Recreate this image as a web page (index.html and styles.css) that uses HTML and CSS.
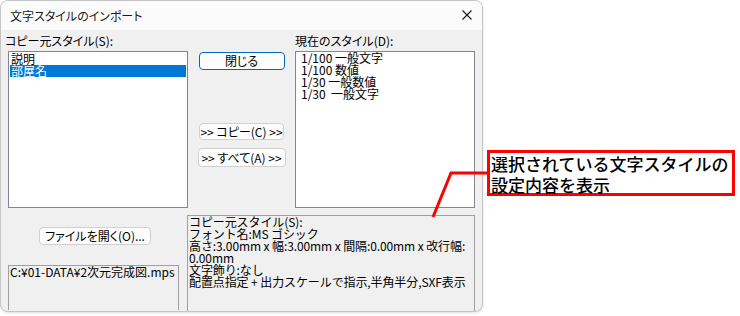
FILE: index.html
```html
<!DOCTYPE html>
<html lang="ja">
<head>
  <meta charset="UTF-8">
  <meta name="viewport" content="width=device-width, initial-scale=1.0">
  <title>文字スタイルのインポート</title>
  <link rel="stylesheet" href="styles.css">
</head>
<body>

  <div class="stage">
    <div class="dialog">
      <div class="titlebar">
        <span class="title">文字スタイルのインポート</span>
        <svg class="close" width="10" height="10" viewBox="0 0 10 10">
          <path d="M0.5 0.5 L9.5 9.5 M9.5 0.5 L0.5 9.5" stroke="#1a1a1a" stroke-width="1.1" fill="none"/>
        </svg>
      </div>

      <div class="client">
        <div class="lists">
          <div class="col">
            <div class="label shift">コピー元スタイル(S):</div>
            <ul class="listbox">
              <li>説明</li>
              <li class="selected">部屋名</li>
            </ul>
          </div>

          <div class="col-mid">
            <button class="btn default close-btn">閉じる</button>
            <button class="btn copy-btn">&gt;&gt; コピー(C) &gt;&gt;</button>
            <button class="btn all-btn">&gt;&gt; すべて(A) &gt;&gt;</button>
          </div>

          <div class="col">
            <div class="label">現在のスタイル(D):</div>
            <ul class="listbox current">
              <li>1/100 一般文字</li>
              <li>1/100 数値</li>
              <li>1/30 一般数値</li>
              <li>1/30&nbsp; 一般文字</li>
            </ul>
          </div>
        </div>

        <div class="bottom">
          <div class="file-panel">
            <button class="btn open-btn">ファイルを開く(O)...</button>
            <div class="path">C:¥01-DATA¥2次元完成図.mps</div>
          </div>
          <div class="info">
            <div>コピー元スタイル(S):</div>
            <div>フォント名:MS ゴシック</div>
            <div>高さ:3.00mm x 幅:3.00mm x 間隔:0.00mm x 改行幅:</div>
            <div>0.00mm</div>
            <div>文字飾り:なし</div>
            <div>配置点指定 + 出力スケールで指示,半角半分,SXF表示</div>
          </div>
        </div>
      </div>
    </div>

    <svg class="leader" width="740" height="316" viewBox="0 0 740 316">
      <polyline points="433,217 451,173 488,173" stroke="#ff0000" stroke-width="3" fill="none"/>
    </svg>
    <div class="callout">選択されている文字スタイルの<br>設定内容を表示</div>
  </div>

</body>
</html>
```

FILE: styles.css
```css
body {
  margin: 0;
  background: #ffffff;
  font-family: "Noto Sans CJK JP", sans-serif;
  color: #000;
}
.stage {
  position: relative;
  width: 740px;
  height: 316px;
  overflow: hidden;
}
.dialog {
  width: 483px;
  height: 312px;
  box-sizing: border-box;
  border: 1px solid #c4c4c4;
  border-radius: 8px;
  overflow: hidden;
  background: #f0f0f0;
  box-shadow: 0 1px 3px rgba(0, 0, 0, 0.12);
}
.titlebar {
  height: 29px;
  background: #fbfbfb;
  display: flex;
  align-items: center;
  justify-content: space-between;
  padding: 0 10px 0 9px;
}
.title {
  font-size: 12px;
  font-feature-settings: "palt";
  color: #1a1a1a;
  margin-top: -1px;
}
.close {
  margin-top: -1px;
}
.client {
  padding: 5px 0 0 7px;
  font-size: 12px;
  line-height: 12px;
}
.lists {
  display: flex;
}
.col {
  width: 180px;
}
.label {
  height: 12px;
  margin-bottom: 4px;
  white-space: nowrap;
  font-feature-settings: "palt";
}
.shift {
  margin-left: -3px;
}
.listbox {
  list-style: none;
  margin: 0;
  padding: 1px 1px 0 1px;
  height: 157px;
  box-sizing: border-box;
  border: 1px solid #82878f;
  background: #fff;
}
.listbox li {
  height: 12px;
  padding-left: 1px;
  white-space: nowrap;
}
.listbox .selected {
  background: #0078d7;
  color: #fff;
}
.current {
  padding-top: 0;
}
.current li {
  padding-left: 4px;
}
.col-mid {
  width: 107px;
  display: flex;
  flex-direction: column;
  align-items: center;
}
.btn {
  font-family: "Noto Sans CJK JP", sans-serif;
  font-size: 12px;
  line-height: 12px;
  font-feature-settings: "palt";
  color: #000;
  background: #fdfdfd;
  border: 1px solid #d0d0d0;
  border-radius: 4px;
  padding: 0;
  box-sizing: border-box;
  white-space: nowrap;
}
.default {
  border-color: #0067c0;
}
.close-btn {
  margin-top: 17px;
  width: 86px;
  height: 18px;
}
.copy-btn {
  margin-top: 53px;
  width: 85px;
  height: 17px;
}
.all-btn {
  margin-top: 8px;
  width: 88px;
  height: 19px;
}
.bottom {
  display: flex;
  gap: 8px;
  margin-top: 7px;
}
.file-panel {
  width: 171px;
}
.open-btn {
  margin: 12px 0 0 31px;
  width: 112px;
  height: 18px;
}
.path {
  margin-top: 20px;
  height: 44px;
  border: 1px solid #a0a0a0;
  border-bottom: none;
  padding-left: 1px;
  white-space: nowrap;
}
.info {
  width: 288px;
  height: 96px;
  box-sizing: border-box;
  border: 1px solid #a0a0a0;
  border-bottom: none;
  padding-left: 1px;
  white-space: nowrap;
  letter-spacing: -0.1px;
}
.info div {
  height: 12px;
}
.leader {
  position: absolute;
  left: 0;
  top: 0;
  pointer-events: none;
}
.callout {
  position: absolute;
  left: 487px;
  top: 150px;
  width: 248px;
  height: 46px;
  box-sizing: border-box;
  border: 3px solid #ff0000;
  background: #fff;
  font-size: 17px;
  line-height: 21px;
  font-weight: 500;
  padding: 0 0 0 1px;
  white-space: nowrap;
}
```
